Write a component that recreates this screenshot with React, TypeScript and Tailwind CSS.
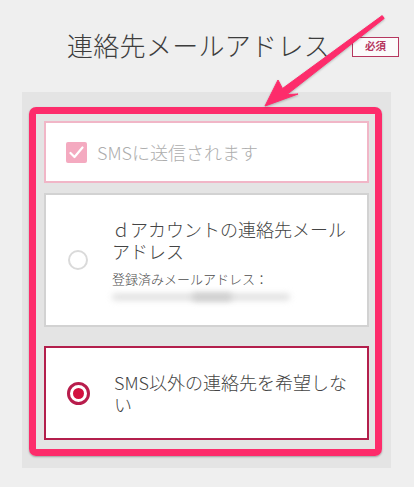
import React from "react";

function Arrow() {
  return (
    <svg
      className="absolute left-0 top-0 pointer-events-none drop-shadow-[0_1px_1px_rgba(0,0,0,0.25)]"
      width="414"
      height="487"
      viewBox="0 0 414 487"
    >
      <polygon
        points="265,106 278,80 282.5,88.5 382.2,15.6 384.2,18.4 286.8,94.6 298,94"
        fill="#fd2c6b"
        stroke="#fd2c6b"
        strokeWidth="1"
        strokeLinejoin="round"
      />
    </svg>
  );
}

export default function App() {
  return (
    <div className="relative w-[414px] h-[487px] overflow-hidden bg-[#efefef] font-['Noto_Sans_CJK_JP',sans-serif]">
      {/* Title row */}
      <div className="flex items-center pl-[67px] pt-[27px]">
        <h1 className="text-[26px] leading-[36px] text-[#3d3d3d] font-light tracking-[0.3px]">
          連絡先メールアドレス
        </h1>
        <div className="ml-[22px] mt-[3px] flex h-[20px] w-[47px] items-center justify-center border-[1.5px] border-[#b6375f] bg-[#fbfbfb] text-[10.5px] font-bold leading-none text-[#b6375f]">
          必須
        </div>
      </div>

      {/* Gray panel */}
      <div className="ml-[22px] mt-[29px] w-[369px] bg-[#e4e4e4] pt-[15px] pb-[12px] pl-[7px]">
        <div className="w-[353px] rounded-[7px] border-[7px] border-[#fd2c6b] pt-[7px] pb-[9px] pl-[8px] pr-[6px] shadow-[0_1px_2px_rgba(0,0,0,0.3)]">
          {/* Card 1 */}
          <div className="flex h-[62px] items-center border-[2px] border-[#f1b6c7] bg-white pl-[20px]">
            <div className="flex h-[21px] w-[21px] items-center justify-center rounded-[2px] bg-[#f4aac0]">
              <svg width="15" height="13" viewBox="0 0 15 13">
                <polyline
                  points="1.5,7 5.5,11 13.5,1.5"
                  fill="none"
                  stroke="#ffffff"
                  strokeWidth="2.2"
                  strokeLinecap="round"
                  strokeLinejoin="round"
                />
              </svg>
            </div>
            <span className="ml-[10px] text-[18px] font-light leading-[24px] text-[#adadad]">
              SMSに送信されます
            </span>
          </div>

          {/* Card 2 */}
          <div className="mt-[10px] flex h-[134px] items-center border-[2px] border-[#d2d2d2] bg-white pl-[22px]">
            <div className="h-[20px] w-[20px] shrink-0 rounded-full border-[2px] border-[#dadada] bg-white" />
            <div className="ml-[24px] w-[248px]">
              <p className="text-[18px] font-light leading-[22px] text-[#444444]">
                ｄアカウントの連絡先メールアドレス
              </p>
              <p className="mt-[8px] text-[13px] font-light leading-[18px] text-[#4d4d4d]">
                登録済みメールアドレス：
              </p>
              <div className="relative mt-[4px] h-[10px] w-[180px]">
                <div className="absolute left-0 top-[2px] h-[6px] w-[178px] rounded-full bg-[#dcdcdc] blur-[3px]" />
                <div className="absolute left-[80px] top-[1px] h-[8px] w-[40px] rounded-full bg-[#cdcdcd] blur-[3px]" />
              </div>
            </div>
          </div>

          {/* Card 3 */}
          <div className="mt-[19px] flex h-[94px] items-center border-[2px] border-[#b31f4c] bg-white pl-[21px]">
            <div className="flex h-[23px] w-[23px] shrink-0 items-center justify-center rounded-full border-[3px] border-[#b81d4c] bg-white">
              <div className="h-[11px] w-[11px] rounded-full bg-[#d3103f]" />
            </div>
            <p className="ml-[24px] w-[248px] text-[18px] font-light leading-[22px] text-[#444444]">
              SMS以外の連絡先を希望しない
            </p>
          </div>
        </div>
      </div>

      <Arrow />
    </div>
  );
}
